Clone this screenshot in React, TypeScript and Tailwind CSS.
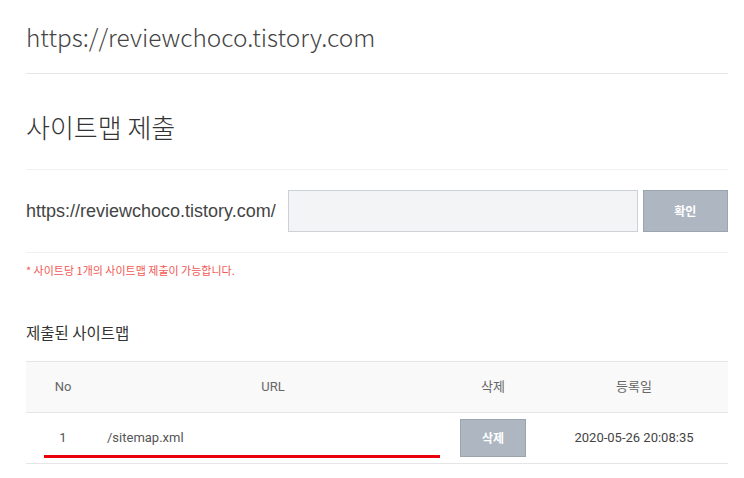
import React from "react";

export default function App() {
  const kr = { fontFamily: '"Noto Sans CJK KR", "Noto Sans", sans-serif' };
  return (
    <div className="w-[744px] h-[478px] bg-white overflow-hidden pl-[26px] pr-[16px] text-[#333]" style={kr}>
      <div className="h-[74px] border-b border-[#e6e6e6] flex items-center">
        <div className="text-[24.4px] font-light text-[#444] leading-none pt-[1px]">https://reviewchoco.tistory.com</div>
      </div>
      <div className="h-[96px] border-b border-[#f0f0f0] flex items-center">
        <div className="text-[26px] font-light text-[#333] leading-none pt-[10px]">사이트맵 제출</div>
      </div>
      <div className="h-[83px] border-b border-[#f0f0f0] flex items-center">
        <div className="text-[18px] text-[#444] mr-[12px]" style={{ fontFamily: '"Liberation Sans", Arial, "Noto Sans CJK KR", sans-serif' }}>
          https://reviewchoco.tistory.com/
        </div>
        <div className="w-[350px] h-[42px] bg-[#f3f4f6] border border-[#cdd0d4]" />
        <button className="ml-[5px] w-[85px] h-[42px] bg-[#aeb7c1] border border-[#9aa5b0] text-white text-[12px] font-bold">
          확인
        </button>
      </div>
      <div className="pt-[9px] text-[11px] text-[#f05a54] leading-[16px]">* 사이트당 1개의 사이트맵 제출이 가능합니다.</div>
      <div className="pt-[43px] text-[15.5px] text-[#333] leading-[22px]">제출된 사이트맵</div>
      <div className="mt-[18px] text-[13px] text-[#555]" style={{ fontFamily: 'Roboto, "Noto Sans CJK KR", sans-serif' }}>
        <div className="h-[52px] bg-[#f9f9fa] border-y border-[#e6e6e6] flex items-center text-[#666]">
          <div className="w-[74px] text-center">No</div>
          <div className="w-[346px] text-center">URL</div>
          <div className="w-[94px] text-center">삭제</div>
          <div className="flex-1 text-center">등록일</div>
        </div>
        <div className="h-[51px] border-b border-[#e6e6e6] flex items-center relative">
          <div className="w-[74px] text-center">1</div>
          <div className="w-[346px] pl-[7px]">/sitemap.xml</div>
          <div className="w-[94px] flex justify-center">
            <button className="w-[66px] h-[38px] bg-[#aeb7c1] border border-[#9aa5b0] text-white text-[12px] font-bold" style={kr}>
              삭제
            </button>
          </div>
          <div className="flex-1 text-center text-[13px] text-[#444]">2020-05-26 20:08:35</div>
          <div className="absolute left-[18px] top-[42px] w-[396px] h-[3px] bg-[#e8000b]" />
        </div>
      </div>
    </div>
  );
}
